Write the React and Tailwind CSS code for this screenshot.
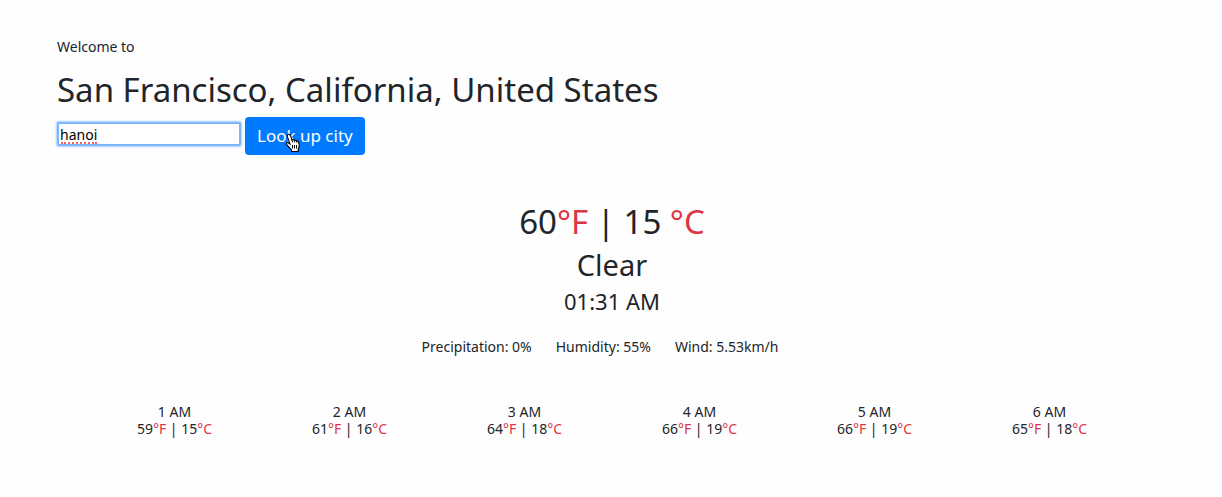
import { useState } from "react";

const hours = [
  { time: "1 AM", f: 59, c: 15 },
  { time: "2 AM", f: 61, c: 16 },
  { time: "3 AM", f: 64, c: 18 },
  { time: "4 AM", f: 66, c: 19 },
  { time: "5 AM", f: 66, c: 19 },
  { time: "6 AM", f: 65, c: 18 },
];

const details = ["Precipitation: 0%", "Humidity: 55%", "Wind: 5.53km/h"];

function Unit({ children }) {
  return <span className="text-[#dc3545]">{children}</span>;
}

function HandPointer() {
  return (
    <svg
      className="pointer-events-none absolute left-10 top-4 h-5 w-4"
      viewBox="0 0 16 20"
      aria-hidden="true"
    >
      <path
        d="M3 1.5C4 1 5 1.5 5.4 2.6L7 6.8C7.8 6.2 8.8 6.4 9.2 7.3C10 6.8 11 7.1 11.4 8C12.3 7.6 13.2 8 13.5 9L14.2 12C14.5 14 13.6 15.4 13.2 16.5V18.5H6.5V17C5 15.4 3.4 13.6 1.6 11.4C.9 10.4 1.9 9.2 3.2 9.8L5 11L2.3 3.4C2 2.6 2.3 1.8 3 1.5Z"
        fill="#fff"
        stroke="#000"
        strokeWidth="1.1"
      />
      <path d="M7.5 12V15.5M9.5 12V15.5M11.5 12V15.5M7 7L7.6 9.4M9.2 7.3L9.8 9.4M11.4 8L11.8 9.6" stroke="#000" fill="none" />
    </svg>
  );
}

export default function App() {
  const [city, setCity] = useState("hanoi");

  return (
    <main className="min-h-screen bg-[#fefefe] pt-[35px] pr-[55px] pb-14 pl-[57px] font-['Noto_Sans',sans-serif] text-sm text-[#212529]">
      <header>
        <p className="leading-6">Welcome to</p>
        <h1 className="mt-[11px] text-[33px] leading-10">San Francisco, California, United States</h1>
        <form className="mt-[7px] flex items-center gap-1" onSubmit={(e) => e.preventDefault()}>
          <div className="relative -mt-1">
            <input
              aria-label="City"
              type="text"
              spellCheck={false}
              value={city}
              onChange={(e) => setCity(e.target.value)}
              className="block h-6 w-[184px] rounded-xs border-2 border-[#7eb6f6] bg-white px-px text-black shadow-[0_0_2px_1px_#a9cffa] outline-none"
            />
            {city === "hanoi" && (
              <span className="pointer-events-none absolute bottom-0.5 left-1 w-9 border-b-2 border-dotted border-[#f0625f]" />
            )}
          </div>
          <button
            type="submit"
            className="relative h-[38px] rounded bg-[#007bff] px-3 text-[17px] text-white"
          >
            Look up city
            <HandPointer />
          </button>
        </form>
      </header>

      <section className="mt-11 text-center">
        <h2 className="text-[33px] leading-[46px]">
          60<Unit>°F</Unit> | 15 <Unit>°C</Unit>
        </h2>
        <h3 className="text-[29px] leading-10">Clear</h3>
        <p className="text-[22px] leading-8">01:31 AM</p>
        <ul className="mt-[18px] flex justify-center gap-6 pr-6 leading-6">
          {details.map((detail) => (
            <li key={detail}>{detail}</li>
          ))}
        </ul>
      </section>

      <section className="mt-11 grid grid-cols-6 px-[30px] text-center leading-[17px]">
        {hours.map(({ time, f, c }) => (
          <div key={time}>
            <p>{time}</p>
            <p>
              {f}
              <Unit>°F</Unit> | {c}
              <Unit>°C</Unit>
            </p>
          </div>
        ))}
      </section>
    </main>
  );
}
